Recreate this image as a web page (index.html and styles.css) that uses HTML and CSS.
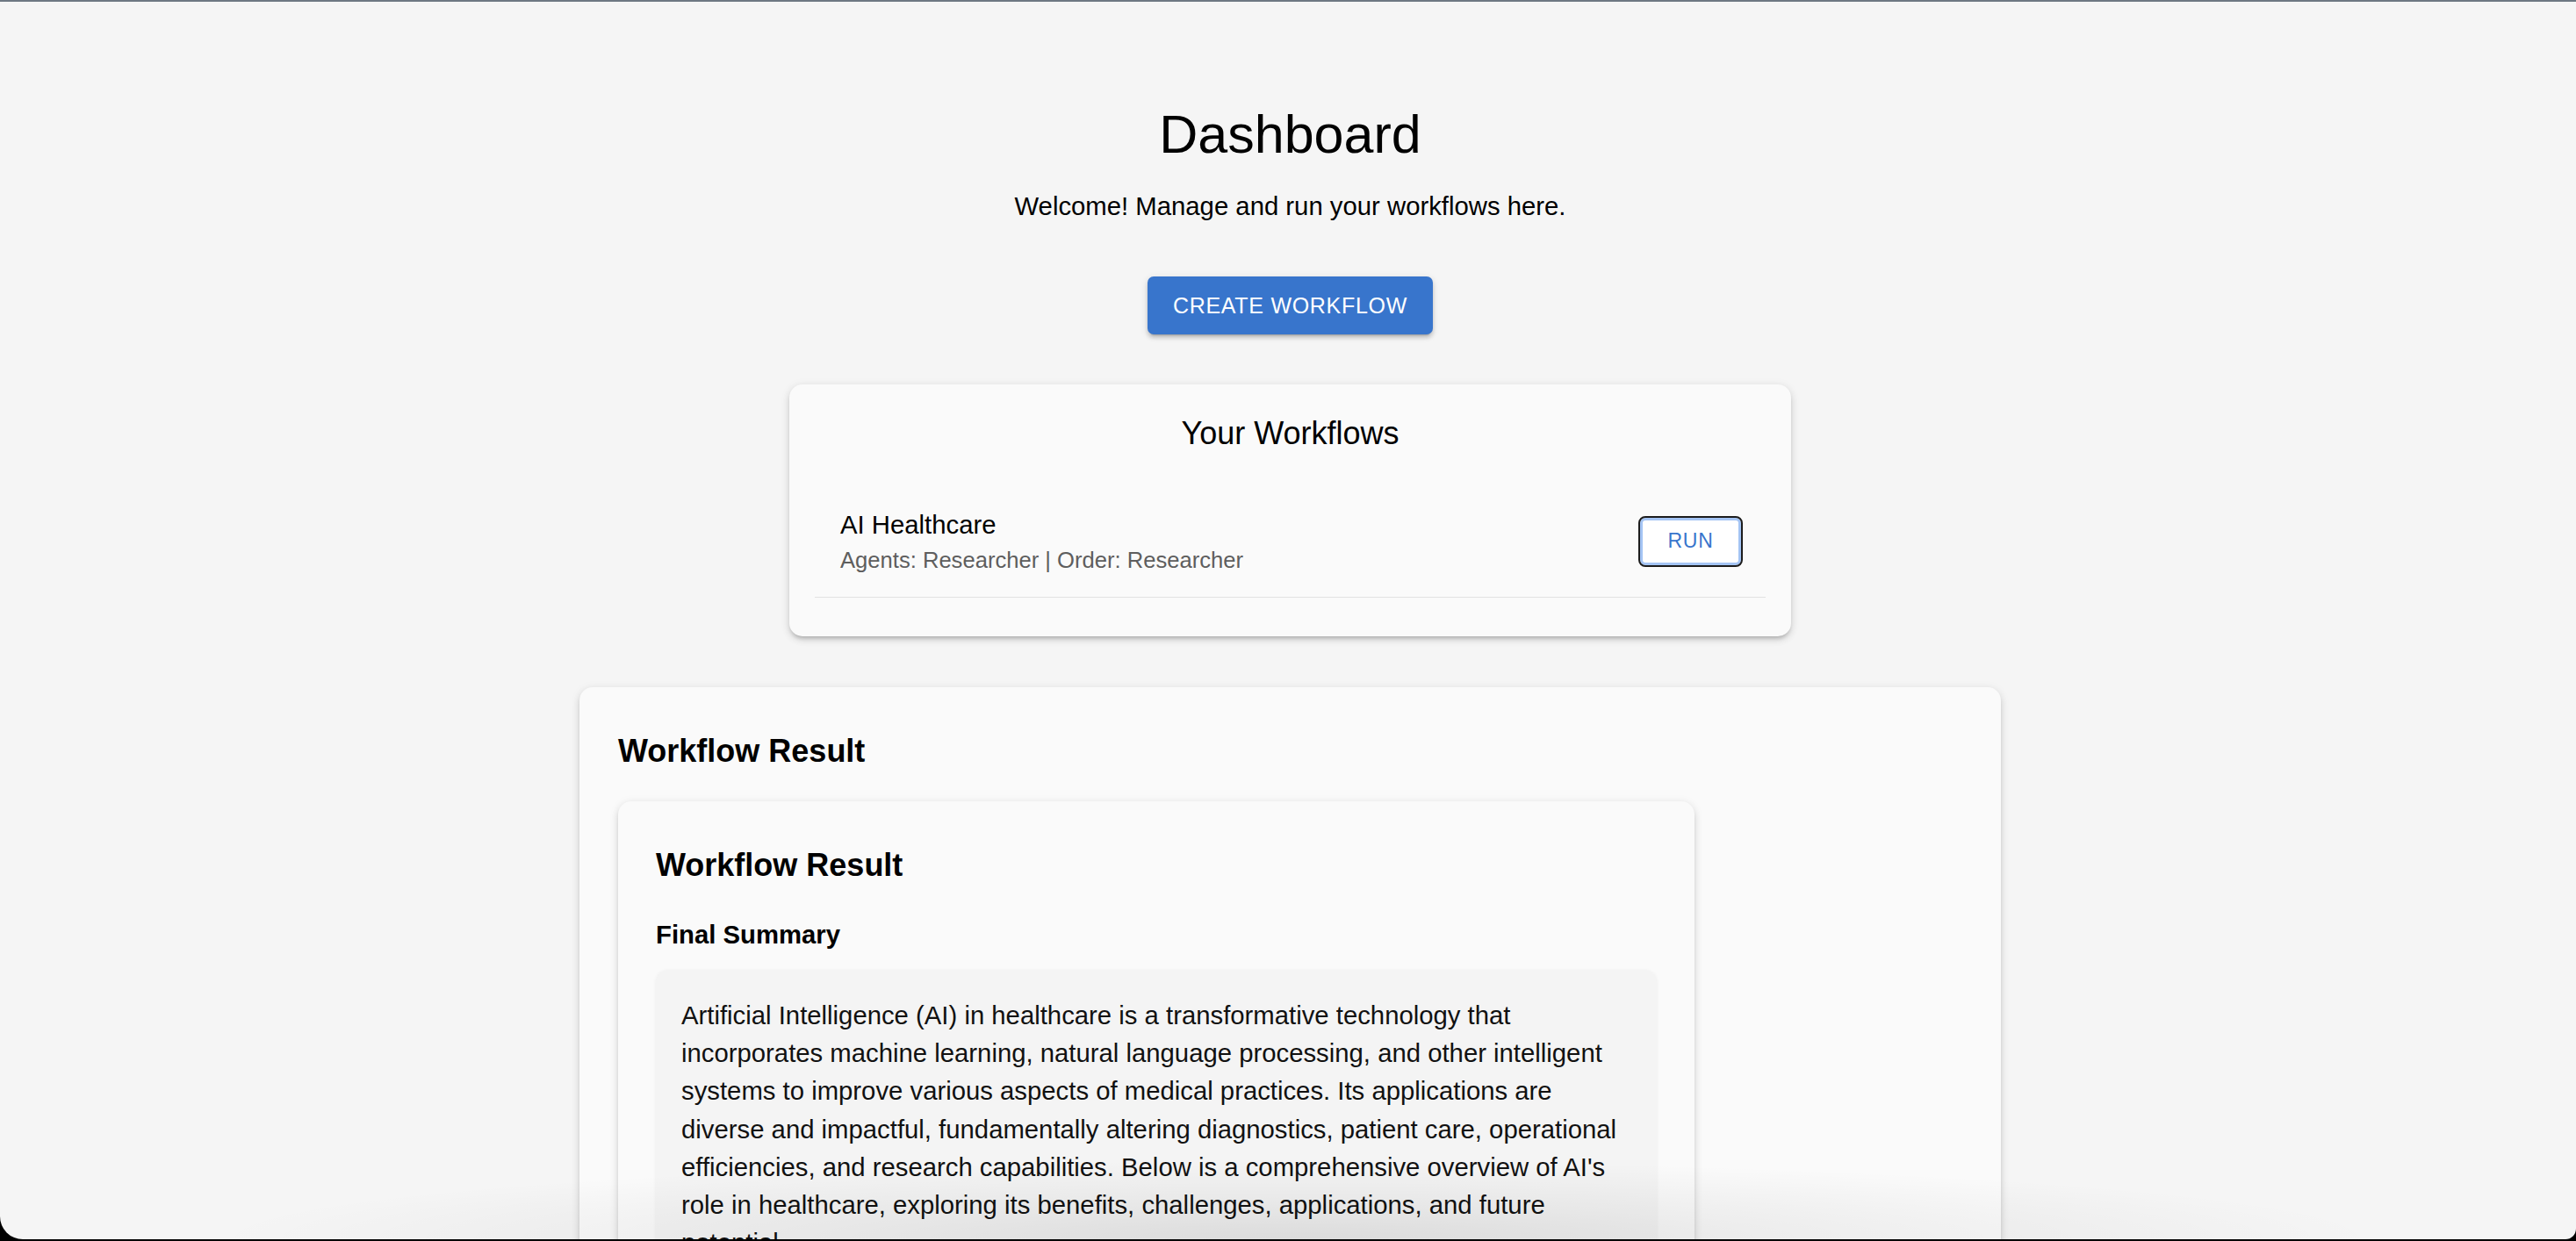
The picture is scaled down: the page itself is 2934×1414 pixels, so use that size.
FILE: index.html
```html
<!DOCTYPE html>
<html lang="en">
<head>
<meta charset="utf-8">
<title>Dashboard</title>
<link rel="stylesheet" href="styles.css">
</head>
<body>
<div class="window">
  <div class="topbar"></div>
  <main class="page">
    <h1 class="title">Dashboard</h1>
    <p class="welcome">Welcome! Manage and run your workflows here.</p>
    <button class="btn-primary" type="button">Create Workflow</button>

    <section class="card workflows">
      <h2 class="workflows-title">Your Workflows</h2>
      <ul class="list">
        <li class="item">
          <div class="item-text">
            <div class="primary">AI Healthcare</div>
            <div class="secondary">Agents: Researcher | Order: Researcher</div>
          </div>
          <button class="btn-run" type="button">Run</button>
        </li>
      </ul>
    </section>

    <section class="card result">
      <h3 class="result-title">Workflow Result</h3>
      <div class="card inner">
        <h3 class="result-title">Workflow Result</h3>
        <h4 class="subtitle">Final Summary</h4>
        <div class="summary">Artificial Intelligence (AI) in healthcare is a transformative technology that incorporates machine learning, natural language processing, and other intelligent systems to improve various aspects of medical practices. Its applications are diverse and impactful, fundamentally altering diagnostics, patient care, operational efficiencies, and research capabilities. Below is a comprehensive overview of AI's role in healthcare, exploring its benefits, challenges, applications, and future potential.</div>
      </div>
    </section>
  </main>
  <div class="dock-shadow"></div>
</div>
</body>
</html>
```

FILE: styles.css
```css
html, body {
  margin: 0;
  padding: 0;
  height: 1414px;
  overflow: hidden;
  background: #000;
}

body {
  font-family: "Liberation Sans", Arial, Helvetica, sans-serif;
  color: #111;
}

.window {
  position: relative;
  height: 1412px;
  background: #f5f5f5;
  border-radius: 0 0 12px 26px;
  overflow: hidden;
}

.topbar {
  height: 2px;
  background: #6e7882;
}

.page {
  display: flex;
  flex-direction: column;
  align-items: center;
  padding: 114px 0 0 5px;
}

.title {
  margin: 0 0 22px;
  font-size: 61px;
  font-weight: 400;
  line-height: 75px;
  color: #000;
}

.welcome {
  margin: 0;
  font-size: 29.3px;
  line-height: 44px;
  color: #000;
}

.btn-primary {
  margin-top: 58px;
  height: 66px;
  padding: 0 29px;
  border: none;
  border-radius: 7px;
  background: #3875cc;
  color: #fff;
  font-family: "Liberation Sans", Arial, Helvetica, sans-serif;
  font-size: 25px;
  letter-spacing: 0.02857em;
  text-transform: uppercase;
  box-shadow: 0 5px 2px -4px rgba(0, 0, 0, 0.2), 0 4px 4px rgba(0, 0, 0, 0.14), 0 2px 9px rgba(0, 0, 0, 0.12);
}

.card {
  background: #fafafa;
  border-radius: 15px;
  box-shadow: 0 4px 4px -2px rgba(0, 0, 0, 0.18), 0 4px 8px rgba(0, 0, 0, 0.1), 0 2px 12px rgba(0, 0, 0, 0.08);
}

.workflows {
  margin-top: 57px;
  width: 1141px;
  box-sizing: border-box;
  padding: 27px 29px 29px;
}

.workflows-title {
  margin: 0 0 16px;
  font-size: 36px;
  font-weight: 400;
  line-height: 58px;
  text-align: center;
  color: #000;
}

.list {
  list-style: none;
  margin: 0;
  padding: 15px 0;
}

.item {
  display: flex;
  align-items: center;
  justify-content: space-between;
  padding: 15px 26px 16px 29px;
  border-bottom: 1px solid #e2e2e2;
}

.item-text {
  margin: 7px 0;
}

.primary {
  font-size: 29.3px;
  line-height: 44px;
  color: #000;
}

.secondary {
  font-size: 25.6px;
  line-height: 37px;
  color: #5e5e5e;
}

.btn-run {
  width: 119px;
  height: 58px;
  box-sizing: border-box;
  border: 2px solid #1c1c1c;
  border-radius: 8px;
  background: #fff;
  box-shadow: inset 0 0 0 3px #a4c4f4;
  color: #3875cc;
  font-family: "Liberation Sans", Arial, Helvetica, sans-serif;
  font-size: 23px;
  letter-spacing: 0.02857em;
  text-transform: uppercase;
}

.result {
  margin-top: 58px;
  width: 1619px;
  box-sizing: border-box;
  padding: 44px;
  flex-shrink: 0;
}

.result-title {
  margin: 0;
  font-size: 36px;
  font-weight: 700;
  line-height: 58px;
  color: #000;
}

.inner {
  margin-top: 28px;
  width: 1226px;
  box-sizing: border-box;
  padding: 44px 43px;
}

.subtitle {
  margin: 24px 0 0;
  font-size: 29.3px;
  font-weight: 700;
  line-height: 51px;
  color: #000;
}

.summary {
  margin-top: 15px;
  padding: 30px 29px 29px;
  border-radius: 14px;
  background: #f4f4f4;
  box-shadow: 0 1px 4px rgba(0, 0, 0, 0.06);
  font-size: 29.3px;
  line-height: 43.2px;
  color: #111;
}

.dock-shadow {
  position: absolute;
  left: 240px;
  right: 220px;
  bottom: 0;
  height: 90px;
  pointer-events: none;
  background: radial-gradient(ellipse 50% 100% at 50% 100%, rgba(0, 0, 0, 0.1) 0%, rgba(0, 0, 0, 0.05) 45%, rgba(0, 0, 0, 0) 100%);
}
```
